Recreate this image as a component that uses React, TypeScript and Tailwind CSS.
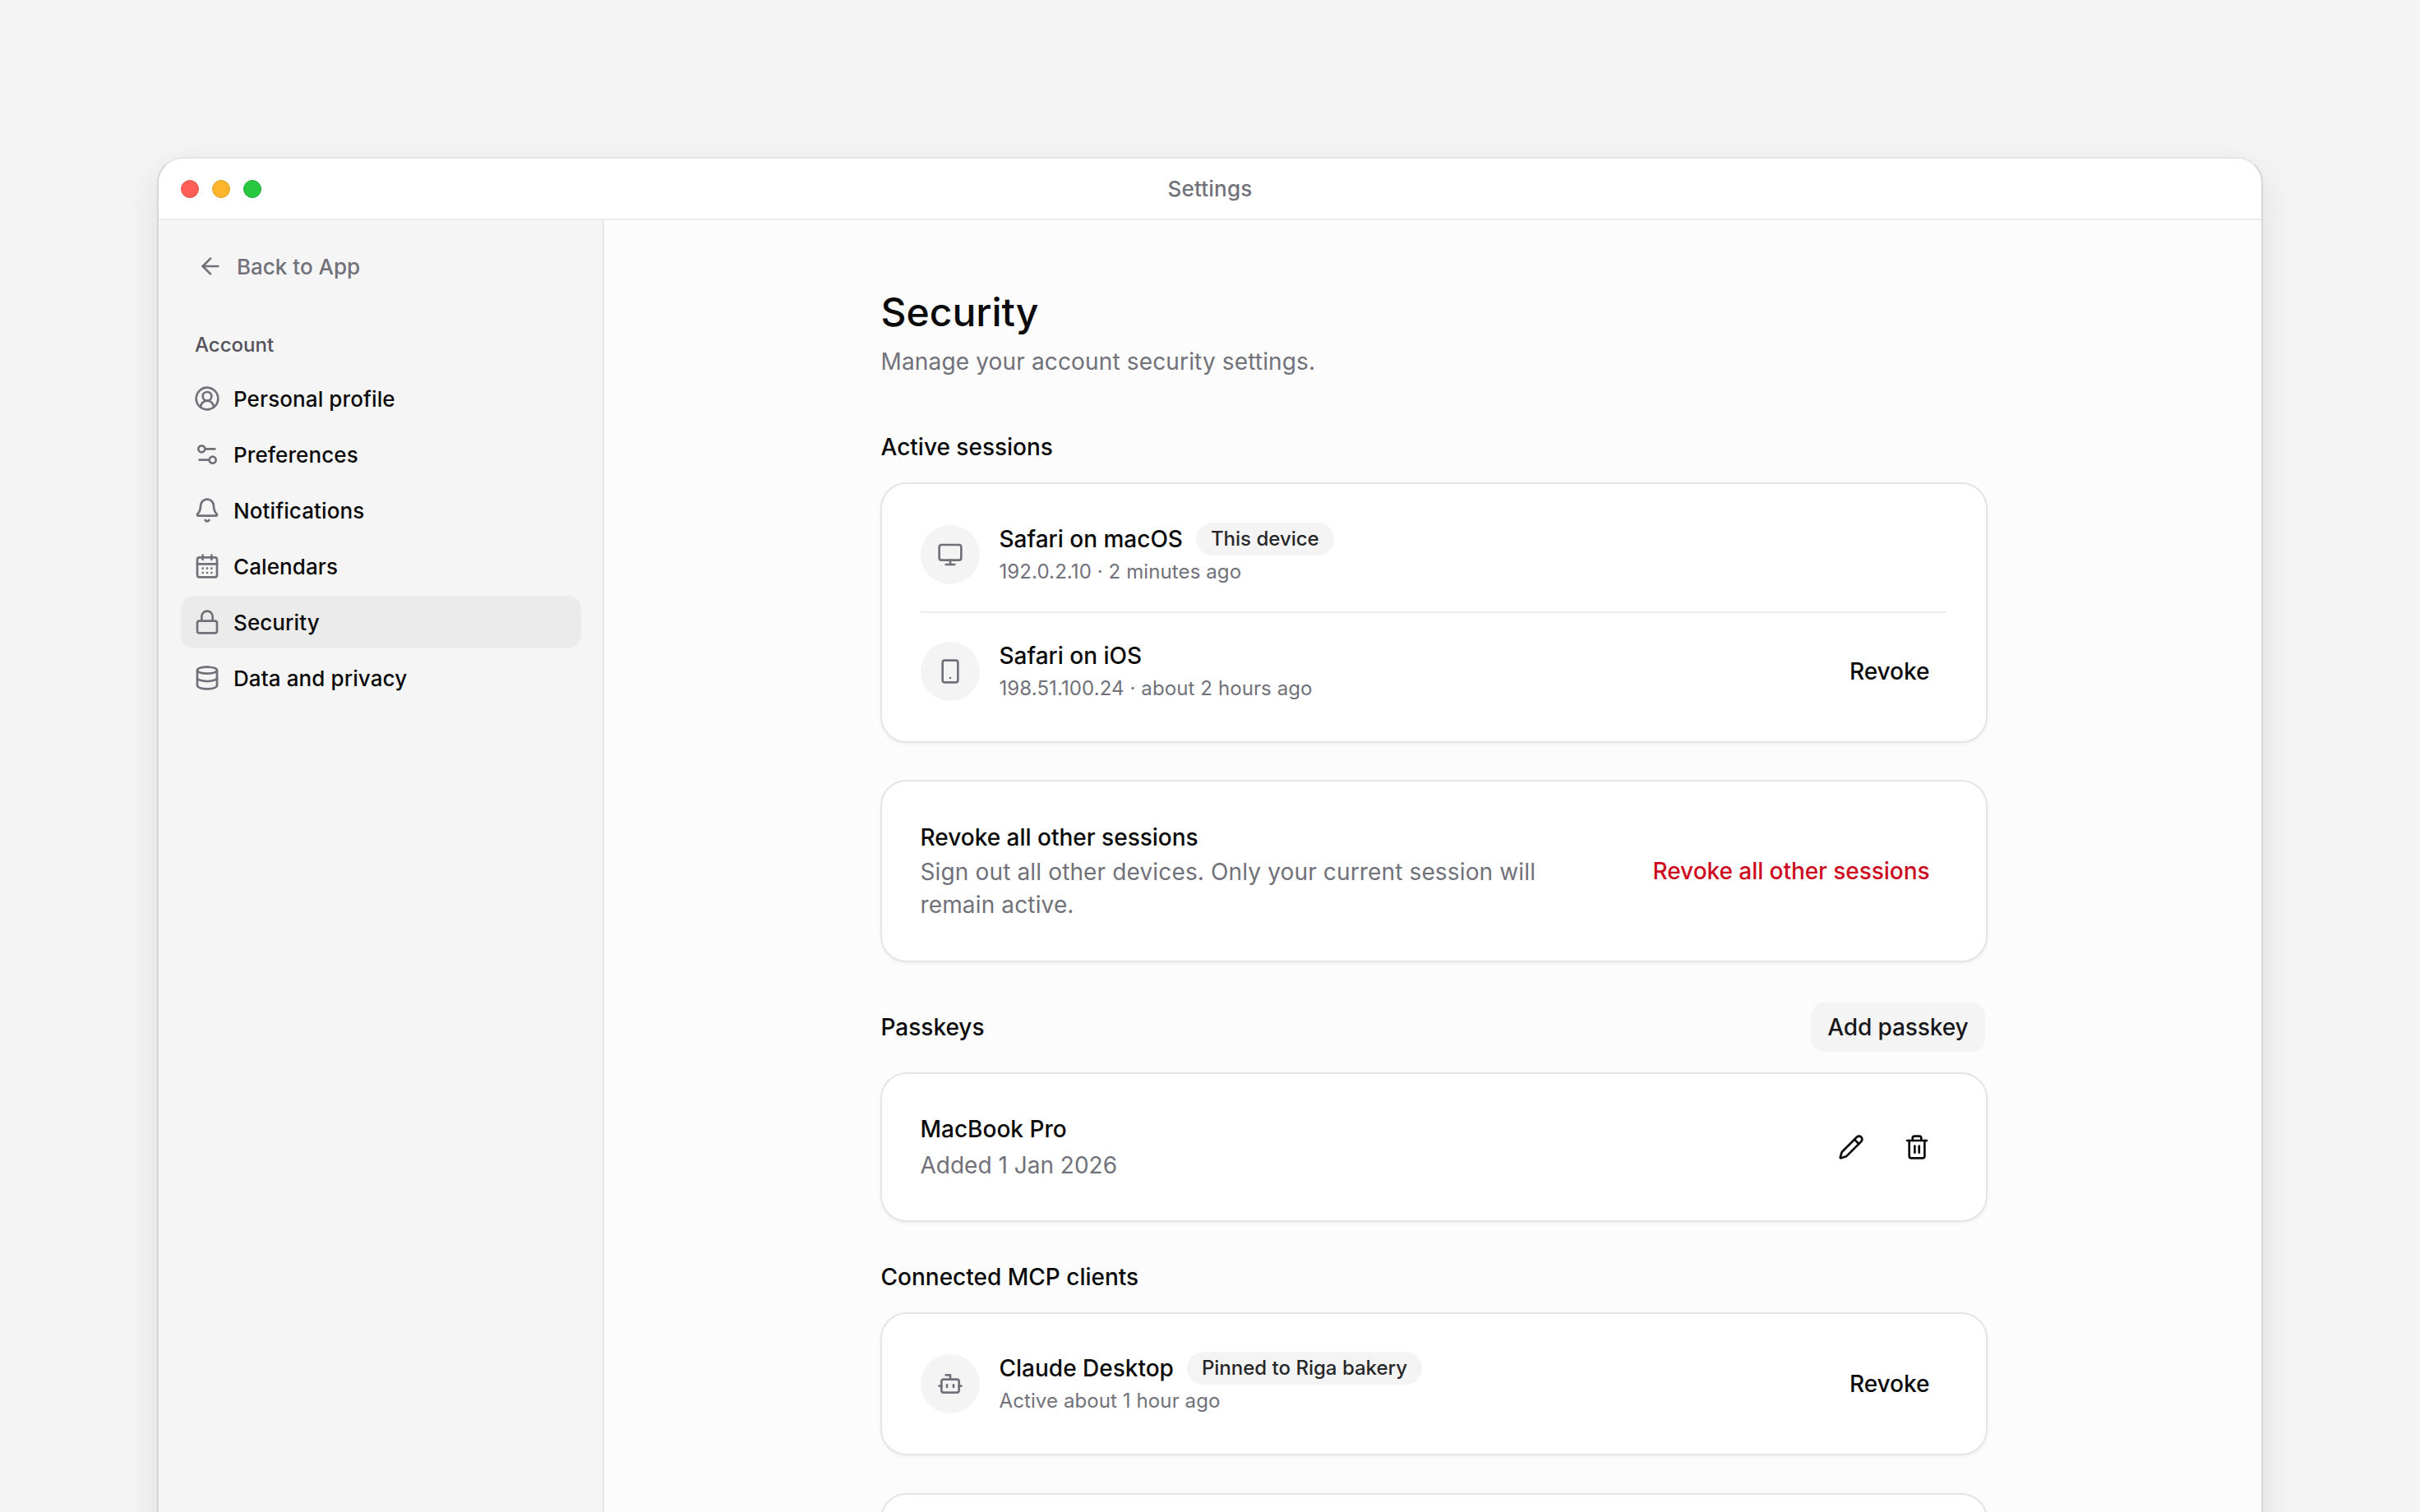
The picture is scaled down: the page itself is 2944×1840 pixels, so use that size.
import {
  ArrowLeft,
  Bell,
  Bot,
  CalendarDays,
  CircleUserRound,
  Database,
  Lock,
  Monitor,
  Pencil,
  Settings2,
  Smartphone,
  Trash2,
} from "lucide-react";
import type { ReactNode } from "react";

const NAV_ITEMS = [
  { label: "Personal profile", icon: CircleUserRound },
  { label: "Preferences", icon: Settings2 },
  { label: "Notifications", icon: Bell },
  { label: "Calendars", icon: CalendarDays },
  { label: "Security", icon: Lock, active: true },
  { label: "Data and privacy", icon: Database },
];

function Card({ className = "", children }: { className?: string; children?: ReactNode }) {
  return (
    <div className={`rounded-[32px] border-2 border-[#e5e5e5] bg-white shadow-[0_2px_4px_rgba(0,0,0,0.05)] ${className}`}>
      {children}
    </div>
  );
}

function Badge({ children }: { children: ReactNode }) {
  return (
    <span className="flex h-10 items-center rounded-full bg-[#f4f4f5] px-[18px] text-[24px] font-[450] text-[#27272a]">
      {children}
    </span>
  );
}

function RevokeButton() {
  return <button className="h-[64px] px-[20px] text-[28px] font-[450] text-[#0a0a0a]">Revoke</button>;
}

function SessionRow({
  icon: Icon,
  name,
  badge,
  meta,
  action,
  className = "",
}: {
  icon: typeof Monitor;
  name: string;
  badge?: string;
  meta: string;
  action?: ReactNode;
  className?: string;
}) {
  return (
    <div className={`flex items-center ${className}`}>
      <div className="flex h-[72px] w-[72px] shrink-0 items-center justify-center rounded-full bg-[#f4f4f5]">
        <Icon size={32} className="text-[#71717a]" />
      </div>
      <div className="ml-6 flex min-w-0 flex-col gap-[2px]">
        <div className="flex h-10 items-center gap-4">
          <span className="text-[28px] font-[450] text-[#0a0a0a]">{name}</span>
          {badge && <Badge>{badge}</Badge>}
        </div>
        <span className="text-[24px] leading-9 tracking-[0.1px] text-[#71717a]">{meta}</span>
      </div>
      <div className="ml-auto">{action}</div>
    </div>
  );
}

export default function App() {
  return (
    <div
      className="h-screen overflow-hidden bg-[#f4f4f4] px-[191px] pt-[191px] text-[#0a0a0a]"
      style={{ fontFamily: "Inter, 'Liberation Sans', sans-serif" }}
    >
      <div className="h-[1800px] overflow-hidden rounded-t-[32px] border-2 border-[#d6d6d6] border-t-[#e4e4e4] bg-[#fcfcfc] shadow-[0_16px_48px_rgba(0,0,0,0.09)]">
        {/* Title bar */}
        <div className="grid h-[75px] grid-cols-[1fr_auto_1fr] items-center border-b-2 border-[#ededed] bg-white px-[27px]">
          <div className="flex gap-4">
            <span className="h-[22px] w-[22px] rounded-full border border-[#e0504a] bg-[#ff5f57]" />
            <span className="h-[22px] w-[22px] rounded-full border border-[#dea123] bg-[#feb52e]" />
            <span className="h-[22px] w-[22px] rounded-full border border-[#20ab36] bg-[#28c840]" />
          </div>
          <span className="text-[26px] font-medium tracking-[0.2px] text-[#71717a]">Settings</span>
          <div />
        </div>

        <div className="flex h-full">
          {/* Sidebar */}
          <aside className="w-[542px] shrink-0 border-r-2 border-[#e8e8e8] bg-[#f5f5f5] pl-[27px] pr-[26px] pt-[38px]">
            <div className="flex h-[36px] items-center gap-[16px] pl-[20px] text-[#71717a]">
              <ArrowLeft size={32} />
              <span className="text-[26px] font-[450]">Back to App</span>
            </div>
            <div className="mt-[58px] flex h-10 items-center pl-[17px] text-[24px] font-[450] text-[#52525b]">
              Account
            </div>
            <nav className="mt-[13px] flex flex-col gap-[4px]">
              {NAV_ITEMS.map((item) => (
                <div
                  key={item.label}
                  className={`flex h-[64px] items-center gap-4 rounded-[16px] px-4 ${item.active ? "bg-[#ebebeb]" : ""}`}
                >
                  <item.icon size={32} className="text-[#71717a]" />
                  <span className="text-[26px] font-[450] tracking-[0.1px] text-[#0a0a0a]">{item.label}</span>
                </div>
              ))}
            </nav>
          </aside>

          {/* Main column */}
          <main className="flex-1 pl-[2px] pt-[80px]">
            <div className="mx-auto w-[1347px]">
              <h1 className="pl-[1px] text-[48px] font-[450] leading-[64px] text-[#0a0a0a]">Security</h1>
              <p className="mt-[8px] pl-[1px] text-[28px] leading-10 tracking-[0.15px] text-[#71717a]">Manage your account security settings.</p>

              <h2 className="mt-[64px] pl-[1px] text-[28px] font-[450] leading-10">Active sessions</h2>
              <Card className="mt-[23px] pb-[15px] pl-[47px] pr-12 pt-[17px]">
                <SessionRow icon={Monitor} name="Safari on macOS" badge="This device" meta="192.0.2.10 · 2 minutes ago" className="h-[140px] border-b-2 border-[#ededed]" />
                <SessionRow
                  icon={Smartphone}
                  name="Safari on iOS"
                  meta="198.51.100.24 · about 2 hours ago"
                  action={<RevokeButton />}
                  className="h-[141px]"
                />
              </Card>

              <Card className="mt-[45px] flex h-[222px] items-center justify-between pl-[47px] pr-12">
                <div className="w-[820px]">
                  <div className="text-[28px] font-[450] leading-10">Revoke all other sessions</div>
                  <p className="mt-[2px] text-[28px] leading-10 tracking-[0.14px] text-[#71717a]">
                    Sign out all other devices. Only your current session will remain active.
                  </p>
                </div>
                <button className="h-[64px] px-[20px] text-[28px] font-[450] tracking-[-0.05px] text-[#cc0c1e]">Revoke all other sessions</button>
              </Card>

              <div className="mt-[49px] flex items-center justify-between pl-[1px] pr-[3px]">
                <h2 className="text-[28px] font-[450]">Passkeys</h2>
                <button className="h-[60px] rounded-[16px] bg-[#f4f4f5] px-[20px] text-[28px] font-[450] tracking-[-0.1px] text-[#18181b]">Add passkey</button>
              </div>
              <Card className="mt-[25px] flex h-[182px] items-center justify-between pl-[47px] pr-12">
                <div>
                  <div className="text-[28px] font-[450] leading-10">MacBook Pro</div>
                  <div className="mt-1 text-[28px] leading-10 text-[#71717a]">Added 1 Jan 2026</div>
                </div>
                <div className="flex gap-2">
                  <button className="flex h-[72px] w-[72px] items-center justify-center text-[#0a0a0a]">
                    <Pencil size={32} />
                  </button>
                  <button className="flex h-[72px] w-[72px] items-center justify-center text-[#0a0a0a]">
                    <Trash2 size={32} />
                  </button>
                </div>
              </Card>

              <h2 className="mt-[47px] pl-[1px] text-[28px] font-[450] leading-10">Connected MCP clients</h2>
              <Card className="mt-[23px] flex h-[174px] items-center pl-[47px] pr-12">
                <SessionRow
                  icon={Bot}
                  name="Claude Desktop"
                  badge="Pinned to Riga bakery"
                  meta="Active about 1 hour ago"
                  action={<RevokeButton />}
                  className="w-full"
                />
              </Card>
              <Card className="mt-[46px] h-[173px]" />
            </div>
          </main>
        </div>
      </div>
    </div>
  );
}
